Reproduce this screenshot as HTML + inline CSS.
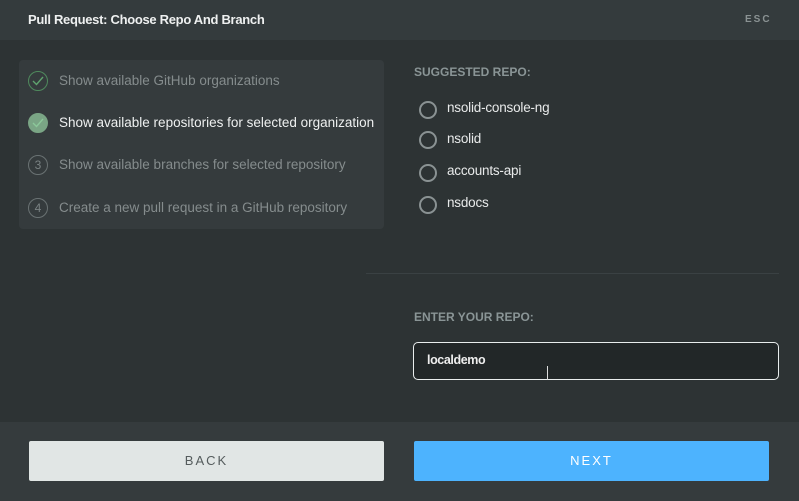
<!DOCTYPE html>
<html><head><style>
*{margin:0;padding:0;box-sizing:border-box}
body{width:799px;height:501px;background:#2d3334;font-family:"Liberation Sans",sans-serif;position:relative;overflow:hidden}
.hdr{position:absolute;left:0;top:0;width:799px;height:40px;background:#343b3d}
.t{position:absolute;left:28px;top:12px;color:#eef0f0;font-size:13px;font-weight:bold;letter-spacing:-0.3px}
.esc{position:absolute;left:745px;top:14px;color:#8a9293;font-size:10px;font-weight:bold;letter-spacing:2px}
.panel{position:absolute;left:19px;top:60px;width:365px;height:169px;background:#353b3d;border-radius:4px}
.it{position:absolute;left:40px;font-size:13.5px;color:#858c8d;letter-spacing:0}
.ic{position:absolute;left:9px;width:20px;height:20px;border-radius:50%;border:1px solid #6a7273;color:#7a8283;font-size:12px;text-align:center;line-height:18px}
.lbl{position:absolute;left:414px;color:#8a9596;font-size:12px;font-weight:bold;letter-spacing:0}
.r{position:absolute;left:419px;width:18px;height:18px;border:2px solid #8a9293;border-radius:50%}
.rt{position:absolute;left:447px;color:#e8eaea;font-size:13.5px;letter-spacing:-0.2px}
.sep{position:absolute;left:366px;top:273px;width:413px;height:1px;background:#3a4143}
.inp{position:absolute;left:413px;top:342px;width:366px;height:38px;border:1.5px solid #e9eded;border-radius:5px;background:#222728}
.inp span{position:absolute;left:13px;top:10px;color:#eee;font-size:12.5px;font-weight:bold;letter-spacing:-0.4px}
.ft{position:absolute;left:0;top:422px;width:799px;height:79px;background:#353b3d}
.b{position:absolute;top:441px;height:40px;font-size:13px;letter-spacing:2px;text-align:center;line-height:40px;border-radius:2px}
</style></head><body>
<div class="hdr"><div class="t">Pull Request: Choose Repo And Branch</div><div class="esc">ESC</div></div>
<div class="panel">
 <div class="ic" style="top:11px;border-color:#4f8a5d;color:#5fa36e"><svg width="14" height="14" viewBox="0 0 14 14" style="margin-top:2px"><path d="M2 7l3.5 3.5L12 3" stroke="#5fa36e" stroke-width="1.4" fill="none"/></svg></div>
 <div class="it" style="top:13px">Show available GitHub organizations</div>
 <div class="ic" style="top:53px;background:#7aa585;border-color:#7aa585"><svg width="14" height="14" viewBox="0 0 14 14" style="margin-top:2px"><path d="M2 7l3.5 3.5L12 3" stroke="#8cc89a" stroke-width="1.4" fill="none"/></svg></div>
 <div class="it" style="top:55px;color:#eef0f0">Show available repositories for selected organization</div>
 <div class="ic" style="top:95px">3</div>
 <div class="it" style="top:97px">Show available branches for selected repository</div>
 <div class="ic" style="top:138px">4</div>
 <div class="it" style="top:140px">Create a new pull request in a GitHub repository</div>
</div>
<div class="lbl" style="top:65px">SUGGESTED REPO:</div>
<div class="r" style="top:101px"></div><div class="rt" style="top:100px">nsolid-console-ng</div>
<div class="r" style="top:131px"></div><div class="rt" style="top:131px">nsolid</div>
<div class="r" style="top:164px"></div><div class="rt" style="top:163px">accounts-api</div>
<div class="r" style="top:196px"></div><div class="rt" style="top:195px">nsdocs</div>
<div class="sep"></div>
<div class="lbl" style="top:310px">ENTER YOUR REPO:</div>
<div class="inp"><span>localdemo</span></div>
<div style="position:absolute;left:547px;top:366px;width:1px;height:14px;background:#ddd"></div>
<div class="ft"></div>
<div class="b" style="left:29px;width:355px;background:#e1e6e5;color:#555c5d">BACK</div>
<div class="b" style="left:414px;width:355px;background:#4db3fe;color:#fff">NEXT</div>
</body></html>
